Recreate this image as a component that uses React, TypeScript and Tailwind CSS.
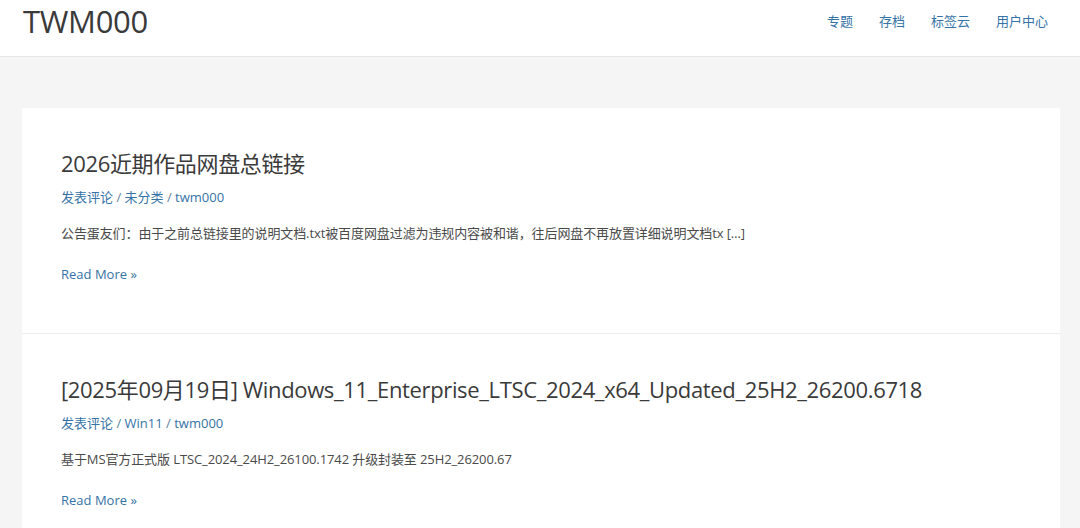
const font = { fontFamily: '"Open Sans", "Noto Sans CJK SC", sans-serif' };

type Post = {
  title: string;
  category: string;
  excerpt: string;
};

const posts: Post[] = [
  {
    title: '2026近期作品网盘总链接',
    category: '未分类',
    excerpt: '公告蛋友们：由于之前总链接里的说明文档.txt被百度网盘过滤为违规内容被和谐，往后网盘不再放置详细说明文档tx […]',
  },
  {
    title: '[2025年09月19日] Windows_11_Enterprise_LTSC_2024_x64_Updated_25H2_26200.6718',
    category: 'Win11',
    excerpt: '基于MS官方正式版 LTSC_2024_24H2_26100.1742 升级封装至 25H2_26200.67',
  },
];

const nav = ['专题', '存档', '标签云', '用户中心'];

function Article({ post }: { post: Post }) {
  return (
    <article className="border-b border-[#ececec] px-[39px] pt-[41px] pb-[49px]">
      <h2 className="text-[22px] leading-[29px] tracking-[-0.35px] text-[#3a3a3a]">{post.title}</h2>
      <div className="mt-[9px] text-[13px] leading-[20px] text-[#3a3a3a]">
        <a className="text-[#3573a6]">发表评论</a>
        <span className="text-[#5d7f9c]"> / </span>
        <a className="text-[#3573a6]">{post.category}</a>
        <span className="text-[#5d7f9c]"> / </span>
        <a className="text-[#3573a6]">twm000</a>
      </div>
      <p className="mt-[16px] text-[13px] leading-[20px] tracking-[-0.1px] text-[#4a4a4a]">{post.excerpt}</p>
      <a className="mt-[21px] block text-[13px] leading-[20px] text-[#3573a6]">Read More »</a>
    </article>
  );
}

export default function App() {
  return (
    <div className="min-h-screen bg-[#f5f5f5]" style={font}>
      <header className="flex h-[57px] items-start justify-between border-b border-[#e6e6e6] bg-white pl-[23px] pr-[32px]">
        <div className="mt-[2px] text-[31px] leading-[38px] tracking-[-0.3px] text-[#3a3a3a]">TWM000</div>
        <nav className="mt-[11px] flex gap-[26px] text-[13px] leading-[20px] text-[#3573a6]">
          {nav.map((n) => (
            <a key={n}>{n}</a>
          ))}
        </nav>
      </header>
      <main className="pl-[22px] pr-[20px] pt-[51px]">
        <div className="bg-white">
          {posts.map((p) => (
            <Article key={p.title} post={p} />
          ))}
        </div>
      </main>
    </div>
  );
}
